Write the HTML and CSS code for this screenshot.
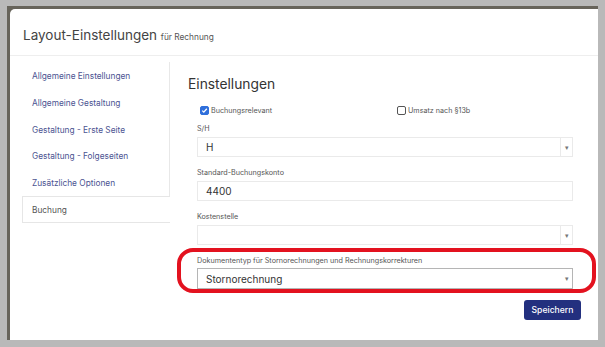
FILE: index.html
```html
<!DOCTYPE html>
<html lang="de">
<head>
    <meta charset="UTF-8">
    <title>Layout-Einstellungen</title>
    <link rel="stylesheet" href="styles.css">
</head>
<body>
    <div class="frame">
        <div class="card">
            <div class="card-header">
                <h1>Layout-Einstellungen <small>für Rechnung</small></h1>
            </div>
            <div class="card-body">
                <ul class="side-nav">
                    <li><a href="#">Allgemeine Einstellungen</a></li>
                    <li><a href="#">Allgemeine Gestaltung</a></li>
                    <li><a href="#">Gestaltung - Erste Seite</a></li>
                    <li><a href="#">Gestaltung - Folgeseiten</a></li>
                    <li><a href="#">Zusätzliche Optionen</a></li>
                    <li class="active"><a href="#">Buchung</a></li>
                </ul>
                <div class="settings">
                    <h2>Einstellungen</h2>
                    <div class="check-row">
                        <label class="check"><span class="box checked"><svg viewBox="0 0 10 10" width="7" height="7"><path d="M1.8 5.2 L4 7.3 L8.3 2.6" fill="none" stroke="#fff" stroke-width="1.9"/></svg></span>Buchungsrelevant</label>
                        <label class="check"><span class="box"></span>Umsatz nach §13b</label>
                    </div>
                    <div class="field">
                        <label>S/H</label>
                        <div class="select"><span>H</span><span class="arrow">▾</span></div>
                    </div>
                    <div class="field">
                        <label>Standard-Buchungskonto</label>
                        <div class="input">4400</div>
                    </div>
                    <div class="field">
                        <label>Kostenstelle</label>
                        <div class="select"><span></span><span class="arrow">▾</span></div>
                    </div>
                    <div class="field highlight">
                        <label>Dokumententyp für Stornorechnungen und Rechnungskorrekturen</label>
                        <div class="select dark"><span>Stornorechnung</span><span class="arrow plain">▾</span></div>
                    </div>
                    <div class="actions">
                        <button class="save-button">Speichern</button>
                    </div>
                </div>
            </div>
        </div>
    </div>
</body>
</html>
```

FILE: styles.css
```css
body {
    margin: 0;
    padding: 6px 7px 7px 7px;
    background-color: #b9b9b9;
    font-family: Inter, "Noto Sans", sans-serif;
}

.frame {
    background-color: #67645b;
    padding: 3px 0 0 3px;
}

.card {
    background-color: #fff;
    border-top-left-radius: 5px;
    height: 331px;
}

.card-header {
    height: 47px;
    box-sizing: border-box;
    padding: 18px 13px 0 13px;
    border-bottom: 1px solid #eeeeee;
}

.card-header h1 {
    margin: 0;
    font-size: 13.5px;
    font-weight: 400;
    color: #444;
}

.card-header small {
    font-size: 8.3px;
    color: #555;
}

.card-body {
    display: flex;
    padding: 6px 24px 0 12px;
}

.side-nav {
    list-style: none;
    margin: 0;
    padding: 0;
    width: 147px;
    flex: none;
    border-right: 1px solid #e8e8e8;
    align-self: flex-start;
}

.side-nav li {
    height: 26.7px;
    display: flex;
    align-items: center;
    padding-left: 10px;
}

.side-nav li:first-child {
    margin-top: 1px;
}

.side-nav a {
    font-size: 8.3px;
    color: #4b5391;
    text-decoration: none;
}

.side-nav li.active {
    border: 1px solid #e6e6e6;
    border-right: none;
    margin-right: -1px;
    background-color: #fff;
    height: 25px;
    padding-left: 9px;
}

.side-nav li.active a {
    color: #555;
}

.settings {
    flex: 1;
    padding-left: 18px;
}

.settings h2 {
    margin: 14px 0 14px 0;
    font-size: 13.8px;
    font-weight: 400;
    color: #333;
}

.check-row {
    display: flex;
    padding-left: 12px;
    margin-bottom: 9px;
}

.check {
    display: flex;
    align-items: center;
    font-size: 7.2px;
    color: #555;
    width: 197px;
}

.box {
    width: 7px;
    height: 7px;
    border: 1px solid #555;
    border-radius: 2px;
    margin-right: 2px;
    display: flex;
    align-items: center;
    justify-content: center;
}

.box.checked {
    background-color: #2f6fdb;
    border-color: #2f6fdb;
}

.field {
    padding-left: 9px;
    width: 376px;
    margin-bottom: 11px;
}

.field label {
    display: block;
    font-size: 7.2px;
    color: #555;
    margin-bottom: 4px;
}

.select,
.input {
    height: 20px;
    box-sizing: border-box;
    border: 1px solid #eaeaea;
    display: flex;
    align-items: center;
    font-size: 10px;
    color: #333;
    padding-left: 8px;
}

.select span:first-child {
    flex: 1;
}

.arrow {
    width: 11px;
    height: 100%;
    border-left: 1px solid #eaeaea;
    font-size: 7px;
    color: #777;
    display: flex;
    align-items: center;
    justify-content: center;
}

.arrow.plain {
    border-left: none;
}

.highlight {
    position: relative;
}

.highlight label {
    margin-bottom: 3px;
}

.highlight::before {
    content: "";
    position: absolute;
    left: -11px;
    right: -23px;
    top: -8px;
    bottom: -4px;
    border: 4px solid #e3121f;
    border-radius: 16px;
}

.select.dark {
    height: 21px;
    border-color: #b5b5b5;
}

.actions {
    display: flex;
    justify-content: flex-end;
    width: 393px;
    margin-top: 5px;
}

.save-button {
    background-color: #23307f;
    color: #fff;
    border: none;
    border-radius: 3px;
    font-family: Inter, "Noto Sans", sans-serif;
    font-size: 8.6px;
    font-weight: 500;
    width: 57px;
    height: 20px;
    padding: 0;
}
```
